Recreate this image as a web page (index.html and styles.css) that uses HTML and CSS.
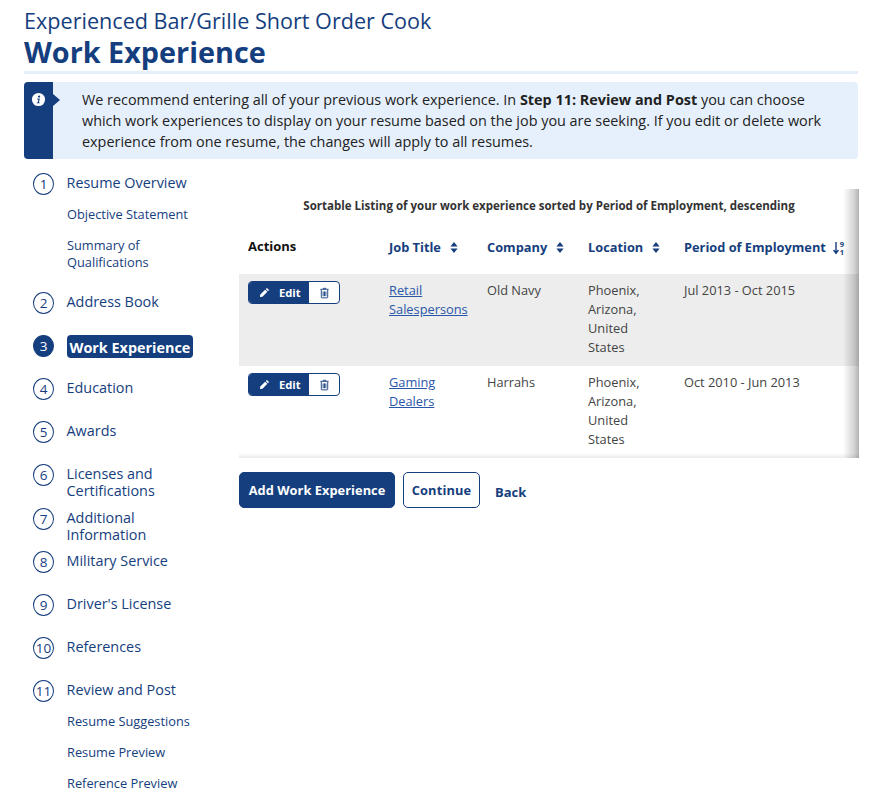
FILE: index.html
```html
<!DOCTYPE html>
<html lang="en">
<head>
<meta charset="utf-8">
<title>Work Experience</title>
<link rel="stylesheet" href="styles.css">
</head>
<body>
<header class="page-head">
  <div class="resume-name">Experienced Bar/Grille Short Order Cook</div>
  <h1 class="page-title">Work Experience</h1>
</header>
<div class="notice">
  <div class="notice-flag">
    <svg class="notice-icon" viewBox="0 0 16 16"><circle cx="8" cy="8" r="7" fill="#fff"/><circle cx="8.6" cy="4.9" r="1.2" fill="#153e7e"/><path d="M6.6 7h2.8l-1 4.2h.9v.9H6.2v-.9h.9l.8-3.3H6.6z" fill="#153e7e"/></svg>
  </div>
  <p class="notice-text">We recommend entering all of your previous work experience. In <b>Step 11: Review and Post</b> you can choose which work experiences to display on your resume based on the job you are seeking. If you edit or delete work experience from one resume, the changes will apply to all resumes.</p>
</div>
<div class="columns">
  <nav class="steps">
    <div class="step h-sub"><span class="num">1</span><a>Resume Overview</a></div>
    <div class="sub s1"><a>Objective Statement</a></div>
    <div class="sub s2"><a>Summary of<br>Qualifications</a></div>
    <div class="step"><span class="num">2</span><a>Address Book</a></div>
    <div class="step current"><span class="num">3</span><a>Work Experience</a></div>
    <div class="step"><span class="num">4</span><a>Education</a></div>
    <div class="step"><span class="num">5</span><a>Awards</a></div>
    <div class="step two"><span class="num">6</span><a>Licenses and<br>Certifications</a></div>
    <div class="step two"><span class="num">7</span><a>Additional<br>Information</a></div>
    <div class="step"><span class="num">8</span><a>Military Service</a></div>
    <div class="step"><span class="num">9</span><a>Driver's License</a></div>
    <div class="step"><span class="num">10</span><a>References</a></div>
    <div class="step h-sub"><span class="num">11</span><a>Review and Post</a></div>
    <div class="sub s1"><a>Resume Suggestions</a></div>
    <div class="sub s1"><a>Resume Preview</a></div>
    <div class="sub s1"><a>Reference Preview</a></div>
  </nav>
  <main class="content">
    <div class="table-wrap">
      <div class="caption">Sortable Listing of your work experience sorted by Period of Employment, descending</div>
      <table class="jobs">
        <thead>
          <tr>
            <th class="c-actions plain">Actions</th>
            <th class="c-title">Job Title<svg class="sort" viewBox="0 0 8 11"><path d="M4 0l3.6 4.4H.4zM4 11L.4 6.6h7.2z"/></svg></th>
            <th class="c-company">Company<svg class="sort" viewBox="0 0 8 11"><path d="M4 0l3.6 4.4H.4zM4 11L.4 6.6h7.2z"/></svg></th>
            <th class="c-location">Location<svg class="sort" viewBox="0 0 8 11"><path d="M4 0l3.6 4.4H.4zM4 11L.4 6.6h7.2z"/></svg></th>
            <th class="c-period">Period of Employment<svg class="sort-num" viewBox="0 0 12 14"><path d="M3 1v10.500M.6 9l2.400 3.300L5.400 9" fill="none" stroke="#153e7e" stroke-width="1.400"/><text x="6.800" y="5.800" class="sort-digit">9</text><text x="6.800" y="13.500" class="sort-digit">1</text></svg></th>
          </tr>
        </thead>
        <tbody>
          <tr class="odd">
            <td><div class="btns"><span class="edit"><svg class="pencil" viewBox="0 0 12 12"><path d="M8.600 1l2.400 2.400-1.200 1.200L7.400 2.200zM6.700 2.900l2.400 2.400-5.300 5.300L1 11l.4-2.800z"/></svg>Edit</span><span class="trash"><svg class="bin" viewBox="0 0 12 12"><path d="M4.500 1.500V.9h3v.6M1.500 2h9M2.500 2.500v8.100c0 .4.300.7.700.7h5.600c.4 0 .7-.3.700-.7V2.500M4.500 4.300v5.200M6 4.300v5.200M7.500 4.300v5.200" fill="none" stroke="#153e7e" stroke-width="1"/></svg></span></div></td>
            <td><a class="job" href="#">Retail Salespersons</a></td>
            <td>Old Navy</td>
            <td>Phoenix, Arizona, United States</td>
            <td>Jul 2013 - Oct 2015</td>
          </tr>
          <tr>
            <td><div class="btns"><span class="edit"><svg class="pencil" viewBox="0 0 12 12"><path d="M8.600 1l2.400 2.400-1.200 1.200L7.400 2.200zM6.700 2.900l2.400 2.400-5.300 5.300L1 11l.4-2.800z"/></svg>Edit</span><span class="trash"><svg class="bin" viewBox="0 0 12 12"><path d="M4.500 1.500V.9h3v.6M1.500 2h9M2.500 2.500v8.100c0 .4.300.7.700.7h5.600c.4 0 .7-.3.700-.7V2.500M4.500 4.300v5.200M6 4.300v5.200M7.500 4.300v5.200" fill="none" stroke="#153e7e" stroke-width="1"/></svg></span></div></td>
            <td><a class="job" href="#">Gaming Dealers</a></td>
            <td>Harrahs</td>
            <td>Phoenix, Arizona, United States</td>
            <td>Oct 2010 - Jun 2013</td>
          </tr>
        </tbody>
      </table>
    </div>
    <div class="actions">
      <a class="btn primary">Add Work Experience</a>
      <a class="btn outline">Continue</a>
      <a class="back">Back</a>
    </div>
  </main>
</div>
</body>
</html>
```
FILE: styles.css
```css
* { box-sizing: border-box; }
html, body { margin: 0; padding: 0; }
body {
  width: 878px;
  height: 804px;
  overflow: hidden;
  background: #fff;
  padding: 7px 20px 0 24px;
  font-family: "Open Sans", "Noto Sans", sans-serif;
  color: #333;
}
.page-head { border-bottom: 3px solid #e5effb; height: 67px; }
.resume-name { font-size: 21.600px; line-height: 28px; color: #153e7e; }
.page-title { margin: 0; font-size: 28.800px; line-height: 34px; font-weight: 700; color: #153e7e; }

.notice {
  display: flex;
  margin-top: 8px;
  height: 77px;
  background: #e6f0fc;
  border-radius: 4px;
  position: relative;
}
.notice-flag {
  flex: 0 0 29px;
  background: #153e7e;
  border-radius: 4px 0 0 4px;
  position: relative;
  padding: 10px 0 0 7px;
}
.notice-flag::after {
  content: "";
  position: absolute;
  left: 29px;
  top: 12px;
  border-left: 7px solid #153e7e;
  border-top: 6px solid transparent;
  border-bottom: 6px solid transparent;
}
.notice-icon { display: block; width: 15px; height: 15px; }
.notice-text { margin: 0; padding: 7px 20px 0 29px; font-size: 14.400px; line-height: 21px; color: #222; }
.notice-text b { font-weight: 700; }

.columns { display: flex; height: 640px; }
.steps { flex: 0 0 215px; padding-top: 14px; }
.content { flex: 1; padding-top: 30px; min-width: 0; margin-right: -1px; }

.step { display: flex; align-items: flex-start; height: 43px; padding-left: 9px; font-size: 14.400px; line-height: 17px; color: #153e7e; }
.step a { padding-top: 1px; }
.step.h-sub { height: 33px; }
.step.two { height: 44px; }
.step.two + .step.two { height: 43px; }
.num {
  flex: 0 0 21px;
  width: 21px;
  height: 22px;
  border: 1px solid #153e7e;
  border-radius: 50%;
  margin-right: 12.500px;
  font-size: 13.500px;
  line-height: 20px;
  text-align: center;
}
.current .num { background: #153e7e; color: #fff; }
.current a {
  background: #153e7e;
  color: #fff;
  font-weight: 700;
  border-radius: 4px;
  height: 23px;
  padding: 4px 3px 0;
  line-height: 18px;
}
.sub { padding-left: 43px; font-size: 12.800px; line-height: 17px; color: #153e7e; }
.sub.s1 { height: 31px; }
.sub.s2 { height: 55px; }

.table-wrap { position: relative; height: 269px; overflow: hidden; padding-top: 9px; background: #fff; }
.table-wrap::after {
  content: "";
  position: absolute;
  inset: 0;
  pointer-events: none;
  background:
    linear-gradient(to left, rgba(0,0,0,.3) 0, rgba(0,0,0,.17) 5px, rgba(0,0,0,0) 16px),
    linear-gradient(to top, rgba(0,0,0,.08) 0, rgba(0,0,0,0) 5px);
}
.caption { font-size: 11.520px; line-height: 16px; font-weight: 700; text-align: center; color: #333; height: 26px; }
.jobs { border-collapse: collapse; width: 620px; table-layout: fixed; font-size: 12.800px; line-height: 19px; }
.jobs th { text-align: left; color: #153e7e; font-size: 12.800px; font-weight: 700; height: 50px; padding: 0 0 4px 9px; white-space: nowrap; }
.jobs th.plain { color: #111; font-size: 13px; padding-bottom: 6px; }
.c-actions { width: 141px; }
.c-title { width: 98px; }
.c-company { width: 101px; }
.c-location { width: 96px; }
.c-period { width: 184px; }
.sort { width: 8px; height: 11px; margin-left: 9px; fill: #153e7e; vertical-align: -1px; }
.sort-num { width: 12px; height: 14px; margin-left: 7px; vertical-align: -3px; overflow: visible; }
.sort-digit { font-size: 7.500px; fill: #153e7e; font-family: "Open Sans", sans-serif; }
.jobs td { vertical-align: top; padding: 7px 8px 0 9px; height: 92px; color: #444; }
.odd td { background: #ededed; }
.jobs td:nth-child(5) { padding-right: 0; }
.jobs td:nth-child(2) { padding-right: 0; }
.jobs td:nth-child(4) { padding-right: 14px; }
.job { color: #2a56a8; text-decoration: underline; }

.btns { display: flex; width: 92px; height: 23px; border: 1px solid #153e7e; border-radius: 4px; background: #fff; overflow: hidden; }
.edit { flex: 0 0 60px; background: #153e7e; color: #fff; font-size: 11.200px; line-height: 21px; font-weight: 700; display: flex; align-items: center; padding-left: 10px; gap: 9px; }
.pencil { width: 11px; height: 11px; fill: #fff; }
.trash { flex: 1; display: flex; align-items: center; justify-content: center; }
.bin { width: 11px; height: 12px; }

.actions { display: flex; align-items: flex-start; margin-top: 14px; }
.btn { display: block; height: 36px; border-radius: 5px; font-size: 12.800px; font-weight: 700; line-height: 34px; border: 1px solid #153e7e; letter-spacing: .05px; }
.primary { width: 156px; background: #153e7e; color: #fff; text-align: center; }
.outline { width: 77px; margin-left: 8px; color: #153e7e; text-align: center; letter-spacing: .15px; }
.back { margin-left: 15px; padding-top: 11px; font-size: 13px; line-height: 18px; font-weight: 700; color: #153e7e; }
```
